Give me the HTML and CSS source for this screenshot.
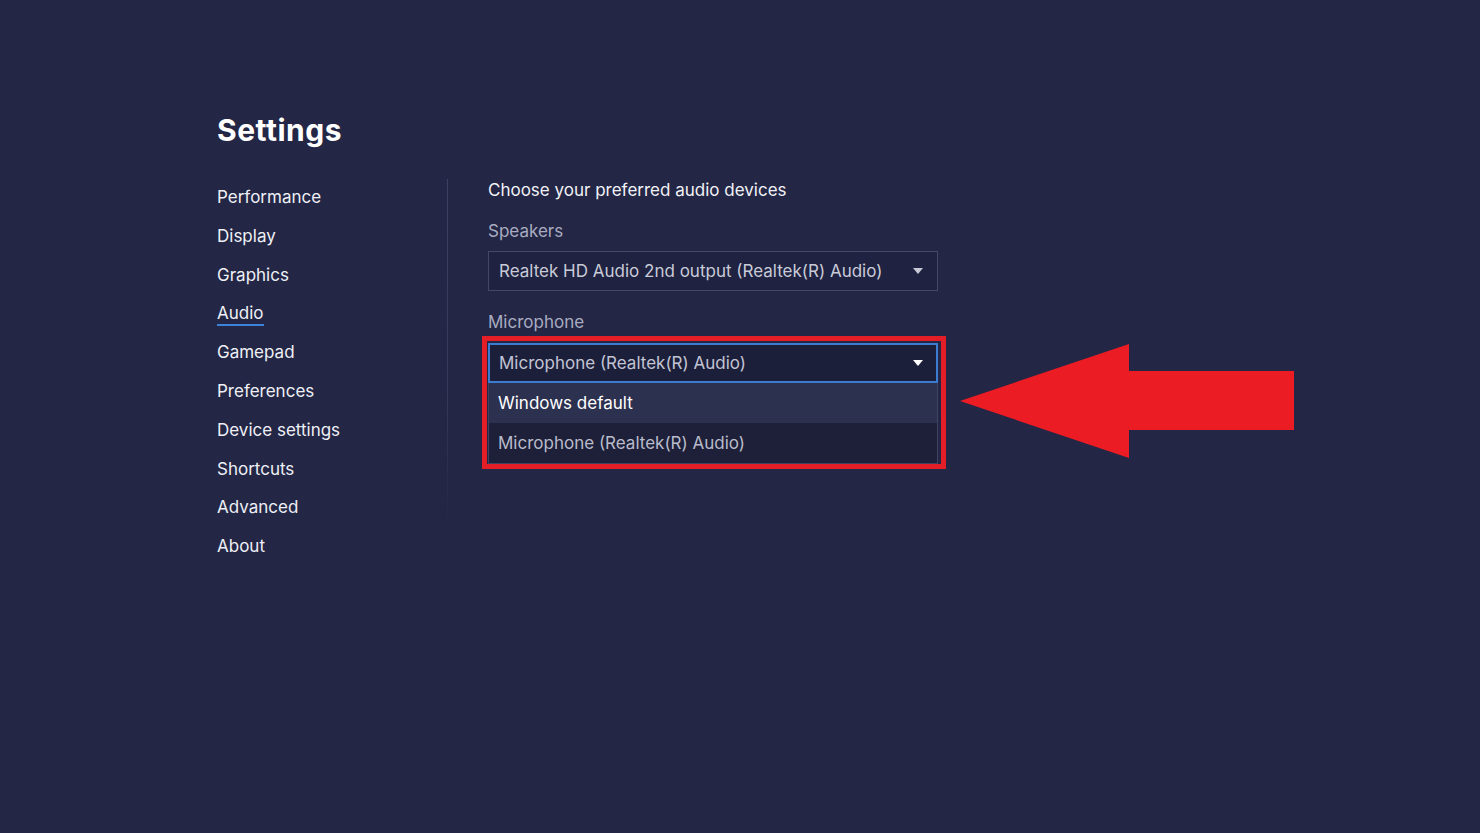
FILE: index.html
```html
<!DOCTYPE html>
<html lang="en">
<head>
<meta charset="utf-8">
<title>Settings</title>
<link rel="stylesheet" href="styles.css">
</head>
<body>
<div class="page">
  <h1 class="title">Settings</h1>
  <div class="layout">
    <nav class="nav">
      <a class="nav-item">Performance</a>
      <a class="nav-item">Display</a>
      <a class="nav-item">Graphics</a>
      <a class="nav-item active">Audio</a>
      <a class="nav-item">Gamepad</a>
      <a class="nav-item">Preferences</a>
      <a class="nav-item">Device settings</a>
      <a class="nav-item">Shortcuts</a>
      <a class="nav-item">Advanced</a>
      <a class="nav-item">About</a>
    </nav>
    <div class="divider"></div>
    <section class="content">
      <div class="heading">Choose your preferred audio devices</div>
      <div class="label">Speakers</div>
      <div class="select">
        <span class="select-text">Realtek HD Audio 2nd output (Realtek(R) Audio)</span>
        <span class="caret"></span>
      </div>
      <div class="label label-mic">Microphone</div>
      <div class="dropdown">
        <div class="select select-open">
          <span class="select-text">Microphone (Realtek(R) Audio)</span>
          <span class="caret caret-white"></span>
        </div>
        <div class="options">
          <div class="option option-hover">Windows default</div>
          <div class="option">Microphone (Realtek(R) Audio)</div>
        </div>
      </div>
    </section>
  </div>
  <div class="highlight"></div>
  <svg class="arrow" width="1480" height="833" viewBox="0 0 1480 833">
    <polygon points="960,401 1129,344 1129,371 1294,371 1294,430 1129,430 1129,458" fill="#ec1c24"/>
  </svg>
</div>
</body>
</html>
```
FILE: styles.css
```css
html, body {
  margin: 0;
  padding: 0;
  background: #232644;
  width: 1480px;
  height: 833px;
  overflow: hidden;
  font-family: "Inter", "Noto Sans", "Liberation Sans", sans-serif;
  color: #eef0f6;
}

.page {
  position: relative;
  width: 1480px;
  height: 833px;
  padding: 108px 0 0 217px;
  box-sizing: border-box;
}

.title {
  margin: 0;
  font-size: 30px;
  font-weight: 700;
  line-height: 44px;
  color: #ffffff;
  letter-spacing: 0.5px;
}

.layout {
  display: flex;
  margin-top: 24px;
}

.nav {
  display: flex;
  flex-direction: column;
  width: 230px;
  padding-top: 2px;
}

.nav-item {
  font-size: 17px;
  line-height: 38.8px;
  color: #eef0f6;
  align-self: flex-start;
}

.nav-item.active {
  position: relative;
}

.nav-item.active::after {
  content: "";
  position: absolute;
  left: 0;
  right: 0;
  bottom: 7px;
  height: 2px;
  background: #3b83da;
}

.divider {
  width: 1px;
  margin-top: 3px;
  height: 352px;
  background: linear-gradient(to bottom, #3c4163 0%, #353a5a 60%, rgba(53, 58, 90, 0) 100%);
}

.content {
  padding-left: 40px;
  display: flex;
  flex-direction: column;
  width: 450px;
}

.heading {
  font-size: 17px;
  line-height: 24px;
  margin-top: 2px;
  color: #f1f2f7;
}

.label {
  font-size: 17px;
  line-height: 24px;
  margin-top: 17px;
  color: #a9acc1;
}

.label-mic {
  margin-top: 19px;
}

.select {
  margin-top: 8px;
  height: 40px;
  box-sizing: border-box;
  border: 1px solid #434865;
  background: #1f2240;
  display: flex;
  align-items: center;
  justify-content: space-between;
  padding: 0 14px 0 10px;
  font-size: 17px;
  color: #c9cbd8;
}

.select-text {
  white-space: nowrap;
}

.caret {
  width: 0;
  height: 0;
  border-left: 5px solid transparent;
  border-right: 5px solid transparent;
  border-top: 6px solid #c7c9d6;
}

.caret-white {
  border-top-color: #ffffff;
}

.dropdown {
  margin-top: 9px;
  display: flex;
  flex-direction: column;
}

.dropdown .select {
  margin-top: 0;
}

.select-open {
  border: 2px solid #3b7cd0;
  padding-left: 9px;
  padding-right: 13px;
  background: #1c1f3a;
  color: #c2c4d4;
}

.options {
  border: 1px solid #3f4462;
  border-top: none;
  background: #1d2038;
}

.option {
  height: 40px;
  display: flex;
  align-items: center;
  padding-left: 9px;
  font-size: 17px;
  color: #b9bbcb;
}

.option-hover {
  background: #2d3150;
  color: #ffffff;
}

.highlight {
  position: absolute;
  left: 482px;
  top: 336px;
  width: 464px;
  height: 133px;
  box-sizing: border-box;
  border: 5px solid #e31e26;
  pointer-events: none;
}

.arrow {
  position: absolute;
  left: 0;
  top: 0;
  pointer-events: none;
}
```
